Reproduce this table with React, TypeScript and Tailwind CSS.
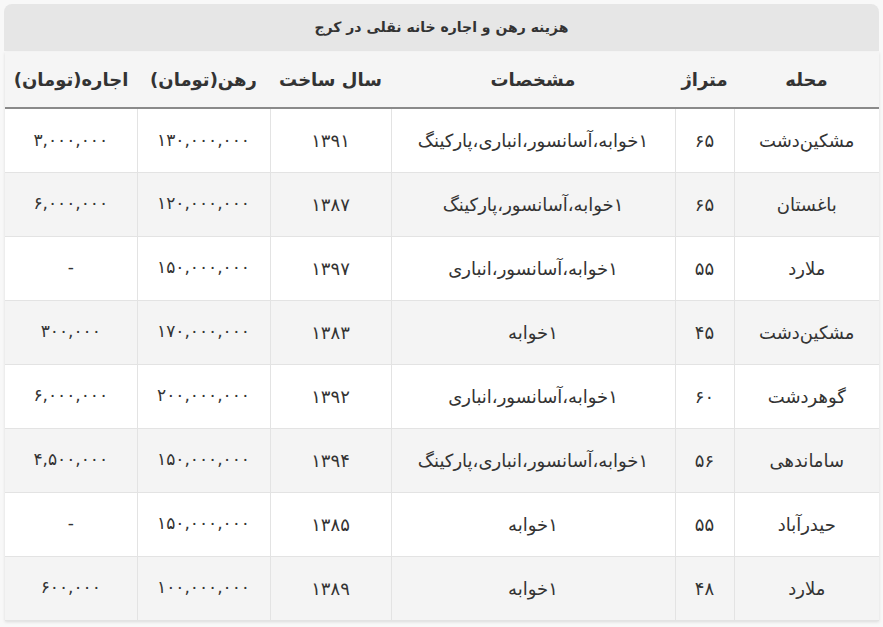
const rows = [
  ["مشکین‌دشت", "۶۵", "۱خوابه،آسانسور،انباری،پارکینگ", "۱۳۹۱", "۱۳۰,۰۰۰,۰۰۰", "۳,۰۰۰,۰۰۰"],
  ["باغستان", "۶۵", "۱خوابه،آسانسور،پارکینگ", "۱۳۸۷", "۱۲۰,۰۰۰,۰۰۰", "۶,۰۰۰,۰۰۰"],
  ["ملارد", "۵۵", "۱خوابه،آسانسور،انباری", "۱۳۹۷", "۱۵۰,۰۰۰,۰۰۰", "-"],
  ["مشکین‌دشت", "۴۵", "۱خوابه", "۱۳۸۳", "۱۷۰,۰۰۰,۰۰۰", "۳۰۰,۰۰۰"],
  ["گوهردشت", "۶۰", "۱خوابه،آسانسور،انباری", "۱۳۹۲", "۲۰۰,۰۰۰,۰۰۰", "۶,۰۰۰,۰۰۰"],
  ["ساماندهی", "۵۶", "۱خوابه،آسانسور،انباری،پارکینگ", "۱۳۹۴", "۱۵۰,۰۰۰,۰۰۰", "۴,۵۰۰,۰۰۰"],
  ["حیدرآباد", "۵۵", "۱خوابه", "۱۳۸۵", "۱۵۰,۰۰۰,۰۰۰", "-"],
  ["ملارد", "۴۸", "۱خوابه", "۱۳۸۹", "۱۰۰,۰۰۰,۰۰۰", "۶۰۰,۰۰۰"],
];

const headers = ["محله", "متراژ", "مشخصات", "سال ساخت", "رهن(تومان)", "اجاره(تومان)"];
const widths = ["w-[145px]", "w-[59px]", "w-[284px]", "w-[121px]", "w-[133px]", "w-[132px]"];

export default function App() {
  return (
    <div
      dir="rtl"
      className="min-h-[627px] w-[883px] bg-[#f8f8f8] px-1 pt-1 text-[#333] [font-family:'DejaVu_Sans',sans-serif]"
    >
      <div className="flex h-[47px] items-center justify-center rounded-t-lg bg-[#e6e6e6] text-[14px] font-bold text-[#333]">
        هزینه رهن و اجاره خانه نقلی در کرج
      </div>
      <table className="mt-px w-[874px] table-fixed border-collapse bg-white shadow-[0_1px_3px_rgba(0,0,0,0.12)]">
        <colgroup>
          {widths.map((w) => (
            <col key={w} className={w} />
          ))}
        </colgroup>
        <thead>
          <tr className="h-[56px] border-b-2 border-[#8a8a8a] bg-[#f5f5f5]">
            {headers.map((h) => (
              <th key={h} className="text-center text-[18px] font-bold">
                {h}
              </th>
            ))}
          </tr>
        </thead>
        <tbody>
          {rows.map((r, i) => (
            <tr key={i} className={`h-[64px] ${i % 2 ? "bg-[#f4f4f4]" : "bg-white"}`}>
              {r.map((c, j) => (
                <td
                  key={j}
                  className={`border border-[#e3e3e3] text-center first:border-r-0 last:border-l-0 ${
                    j >= 4 ? "text-[17px]" : "text-[18px]"
                  }`}
                >
                  {c}
                </td>
              ))}
            </tr>
          ))}
        </tbody>
      </table>
    </div>
  );
}
